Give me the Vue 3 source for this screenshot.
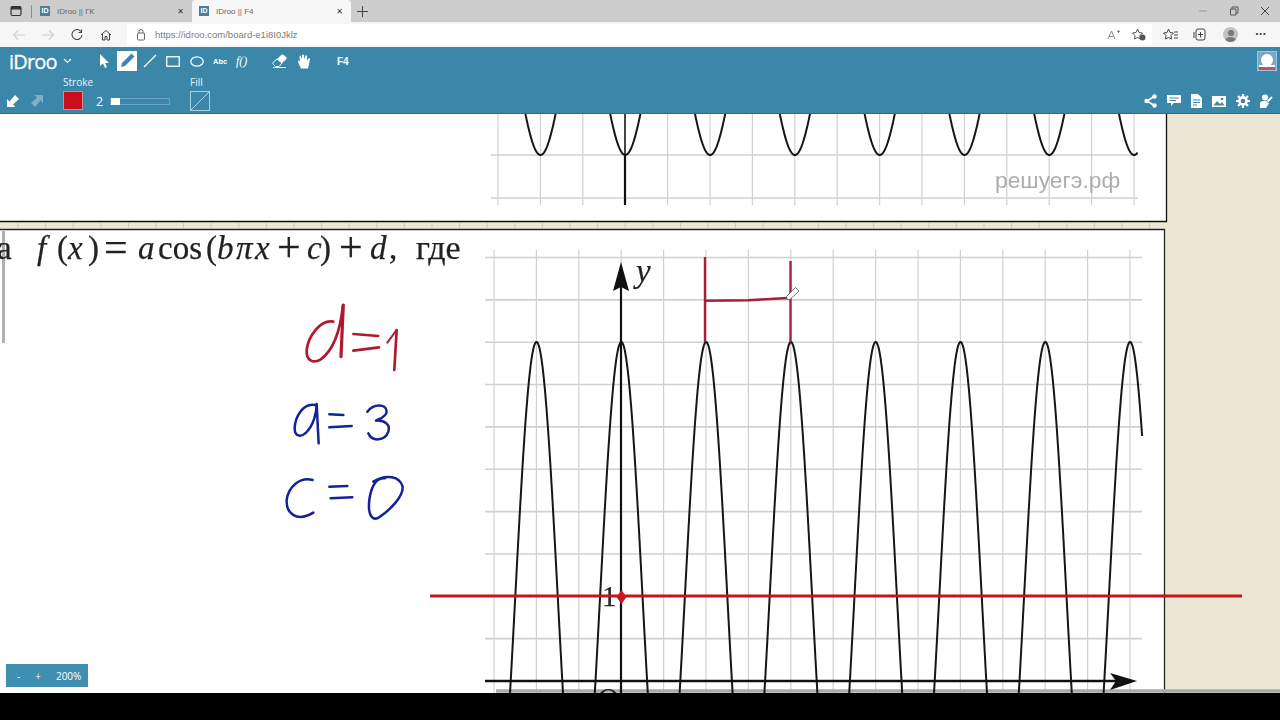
<script setup>
const range = (start, step, n) => Array.from({ length: n }, (_, i) => start + step * i)
const topV = range(498, 42.4, 16)
const topH = [155, 198]
const lowV = range(494, 42.4, 16)
const lowH = range(257.5, 42.35, 10)
const stripTicks = range(18, 27.6, 42)

const sample = (from, to, fn) => {
  const pts = []
  for (let x = from; x <= to + 0.01; x += 0.5) pts.push(`${x.toFixed(1)},${fn(x).toFixed(1)}`)
  return pts.join(' ')
}
const P = 84.8
const lowPeaks = range(536.5, 84.8, 8)
const lowCurves = lowPeaks.map((c, i) =>
  sample(c - 29, i === 7 ? 1142.5 : c + 29, x => 596 - 254 * Math.cos((2 * Math.PI * (x - c)) / P))
)
const topTroughs = range(540.5, 84.8, 8)
const topCurves = topTroughs.map((c, i) =>
  sample(c - 17, i === 7 ? 1138 : c + 17, x => 155 - 73 * (1 - Math.cos((2 * Math.PI * (x - c)) / P)))
)

const formula = [
  { t: 'f', x: 37, i: true },
  { t: '(', x: 57 },
  { t: 'x', x: 68, i: true },
  { t: ')', x: 88 },
  { t: '=', x: 104, s: 42 },
  { t: 'a', x: 138, i: true },
  { t: 'cos', x: 158 },
  { t: '(', x: 206 },
  { t: 'b', x: 217, i: true },
  { t: 'π', x: 236, i: true },
  { t: 'x', x: 255, i: true },
  { t: '+', x: 277, s: 42 },
  { t: 'c', x: 307, i: true },
  { t: ')', x: 320 },
  { t: '+', x: 339, s: 42 },
  { t: 'd', x: 370, i: true },
  { t: ',', x: 389 },
  { t: 'где', x: 416, s: 34 }
]

const redStrokes = [
  { d: 'M190 65C150 58 115 110 110 150C108 182 130 192 152 178C185 155 210 100 219 15', w: 8 },
  { d: 'M220 15L213 170', w: 9.5 },
  { d: 'M250 102L325 108', w: 7 },
  { d: 'M250 152L327 142', w: 8 },
  { d: 'M352 128L380 90', w: 6 },
  { d: 'M380 90L373 210', w: 8 }
]
const blueStrokes = [
  'M135 315C100 308 75 350 74 385C74 412 95 412 110 396C130 375 140 340 140 312L146 430',
  'M178 343L220 345',
  'M178 382L245 378',
  'M292 335C310 310 350 310 350 335C350 350 325 358 318 362C345 360 362 375 355 395C345 425 305 425 295 400',
  'M128 540C90 530 55 560 50 600C48 640 80 668 130 638',
  'M178 560L232 558',
  'M182 595L247 592',
  'M345 535C315 530 300 570 297 610C295 650 310 665 330 650C360 630 400 590 398 560C390 530 350 520 310 545'
]
</script>

<template>
  <div class="screen">
    <header class="tabstrip">
      <svg class="win-icon" width="12" height="12" viewBox="0 0 12 12"><rect x="1" y="1.5" width="10" height="9" rx="1.5" fill="none" stroke="#333" stroke-width="1.2"/><rect x="1" y="1.5" width="10" height="3" fill="#333"/></svg>
      <span class="tab-sep"></span>
      <div class="tab">
        <span class="favicon">ID</span>
        <span class="tab-title">IDroo || ГК</span>
        <span class="tab-close">✕</span>
      </div>
      <div class="tab active">
        <span class="favicon">ID</span>
        <span class="tab-title">IDroo || F4</span>
        <span class="tab-close">✕</span>
      </div>
      <svg class="plus" width="11" height="11" viewBox="0 0 11 11"><path d="M5.5 0V11M0 5.5H11" stroke="#444" stroke-width="1"/></svg>
      <div class="win-controls">
        <svg width="10" height="10" viewBox="0 0 10 10"><path d="M1 5H9" stroke="#999"/></svg>
        <svg width="10" height="10" viewBox="0 0 10 10"><path d="M1.5 3H7V9H1.5ZM3 3V1H9V7H7" fill="none" stroke="#555"/></svg>
        <svg width="10" height="10" viewBox="0 0 10 10"><path d="M1 1L9 9M9 1L1 9" stroke="#444"/></svg>
      </div>
    </header>

    <nav class="addressbar">
      <svg class="nav first" width="14" height="12" viewBox="0 0 14 12"><path d="M13 6H2M6 1.5L1.5 6L6 10.5" fill="none" stroke="#cfcfcf" stroke-width="1.1"/></svg>
      <svg class="nav" width="14" height="12" viewBox="0 0 14 12"><path d="M1 6H12M8 1.5L12.5 6L8 10.5" fill="none" stroke="#cfcfcf" stroke-width="1.1"/></svg>
      <svg class="nav" width="14" height="12" viewBox="0 0 14 12"><path d="M11 2.5A5 5 0 1 0 12 6M11.5 0.5V3.5H8.5" fill="none" stroke="#444" stroke-width="1.1"/></svg>
      <svg class="nav" width="14" height="12" viewBox="0 0 14 12"><path d="M2 6L7 1.5L12 6M3.5 5V11H6V7.5H8V11H10.5V5" fill="none" stroke="#444" stroke-width="1"/></svg>
      <div class="urlbox">
        <svg width="10" height="12" viewBox="0 0 10 12"><rect x="1.5" y="4" width="7" height="7" rx="1" fill="none" stroke="#666"/><path d="M3 4V2.5A2 2 0 0 1 7 2.5V4" fill="none" stroke="#666"/></svg>
        <span class="url">https://idroo.com/board-e1i8I0Jklz</span>
        <svg class="url-right" width="14" height="12" viewBox="0 0 14 12"><path d="M1 10L4.5 2L8 10M2.5 7.5H6.5M10 2.5H13M11.5 1V4" fill="none" stroke="#888"/></svg>
        <svg class="url-star" width="14" height="13" viewBox="0 0 14 13"><path d="M5.5 1L7 4.5L10.5 5L8 7.5L8.5 11L5.5 9.5L2.5 11L3 7.5L0.5 5L4 4.5Z" fill="none" stroke="#555"/><circle cx="10.5" cy="9.5" r="3" fill="#555"/></svg>
      </div>
      <div class="addr-right">
        <svg width="15" height="13" viewBox="0 0 15 13"><path d="M5.5 1L7 4.5L10.5 5L8 7.5L8.5 11L5.5 9.5L2.5 11L3 7.5L0.5 5L4 4.5ZM11 4H15M11 7H15M11 10H15" fill="none" stroke="#444"/></svg>
        <svg width="13" height="13" viewBox="0 0 13 13"><path d="M3 3A2 2 0 0 1 5 1H10A2 2 0 0 1 12 3V10A2 2 0 0 1 10 12H5A2 2 0 0 1 3 10ZM1 4V10M7.5 4V9.5M5 6.5H10" fill="none" stroke="#444"/></svg>
        <span class="avatar"><span class="avatar-head"></span><span class="avatar-body"></span></span>
        <span class="dots">···</span>
      </div>
    </nav>

    <section class="toolbar">
      <div class="row row-one">
        <span class="logo">iDroo</span>
        <svg class="chev" width="9" height="6" viewBox="0 0 9 6"><path d="M1 1L4.5 4.5L8 1" fill="none" stroke="#fff" stroke-width="1.2"/></svg>
        <svg class="tool cursor" width="12" height="16" viewBox="0 0 12 16"><path d="M2 1V13L5 10.5L7 15L9 14L7 10H11Z" fill="#fff"/></svg>
        <span class="pen-box"><svg width="16" height="16" viewBox="0 0 16 16"><path d="M2 14L3 10L11 2L14 5L6 13ZM11 2L12.5 .5L15.5 3.5L14 5" fill="#3a87aa"/></svg></span>
        <svg class="tool line-t" width="14" height="14" viewBox="0 0 14 14"><path d="M1 13L13 1" stroke="#fff" stroke-width="1.3"/></svg>
        <svg class="tool rect-t" width="14" height="11" viewBox="0 0 14 11"><rect x=".75" y=".75" width="12.5" height="9.5" fill="none" stroke="#fff" stroke-width="1.3"/></svg>
        <svg class="tool oval-t" width="14" height="11" viewBox="0 0 14 11"><ellipse cx="7" cy="5.5" rx="6.2" ry="4.7" fill="none" stroke="#fff" stroke-width="1.3"/></svg>
        <span class="abc">Abc</span>
        <span class="fx">f()</span>
        <svg class="tool eraser" width="15" height="14" viewBox="0 0 15 14"><path d="M5 5L9.5 .8Q10.5 0 11.5 .8L14.5 3.5Q15 4.5 14 5.5L10 9Z" fill="#fff"/><path d="M5 5L1 8.5Q.5 9.5 1.5 10.5L3.5 12.5H7L10 9Z" fill="none" stroke="#fff"/><path d="M1 13.5H14" stroke="#fff"/></svg>
        <svg class="tool hand" width="14" height="16" viewBox="0 0 14 15"><path d="M4 15L1 8.5Q0.5 7 2 7L3 8.5L2.5 2.5Q3 1.5 4 2.5L5 6V1.5Q6 .5 7 1.5V6L8.5 2Q9.5 1.5 10 2.5V7L12 4.5Q13.5 4.5 13 6L11 15Z" fill="#fff"/></svg>
        <span class="docname">F4</span>
        <span class="user-box"><span class="ub-head"></span><span class="ub-body"></span></span>
      </div>
      <div class="row row-two">
        <svg class="arrow" width="14" height="14" viewBox="0 0 14 14"><path d="M1 13V5L3.5 7.5L9 1L13 5L7 10.5L9.5 13Z" fill="#fff"/></svg>
        <svg class="arrow arrow-off" width="14" height="14" viewBox="0 0 14 14"><path d="M13 1V9L10.5 6.5L5 13L1 9L7 3.5L4.5 1Z" fill="#7fb0c8"/></svg>
        <div class="labelled stroke-block">
          <span class="mini">Stroke</span>
          <span class="swatch"></span>
        </div>
        <span class="size">2</span>
        <span class="slider"><span class="knob"></span></span>
        <div class="labelled fill-block">
          <span class="mini">Fill</span>
          <svg width="20" height="20" viewBox="0 0 20 20"><rect x=".5" y=".5" width="19" height="19" fill="none" stroke="#9fd3ea"/><path d="M1 19L19 1" stroke="#9fd3ea"/></svg>
        </div>
        <div class="right-icons">
          <svg width="13" height="14" viewBox="0 0 13 14"><path d="M11 2L3 7L11 12" fill="none" stroke="#fff" stroke-width="1.6"/><circle cx="10.5" cy="2.5" r="2.2" fill="#fff"/><circle cx="2.5" cy="7" r="2.2" fill="#fff"/><circle cx="10.5" cy="11.5" r="2.2" fill="#fff"/></svg>
          <svg width="14" height="12" viewBox="0 0 14 12"><path d="M0 0H14V8H7L4 11V8H0Z" fill="#fff"/><path d="M2.5 3H11.5M2.5 5.5H9" stroke="#3a87aa"/></svg>
          <svg width="11" height="14" viewBox="0 0 11 14"><path d="M0 0H7L11 4V14H0Z" fill="#fff"/><path d="M2 6H9M2 8.5H9M2 11H6" stroke="#3a87aa"/></svg>
          <svg width="14" height="11" viewBox="0 0 14 11"><rect width="14" height="11" fill="#fff"/><path d="M1.5 9.5L5 5L8 8L10 6L12.5 9.5Z" fill="#3a87aa"/><circle cx="10" cy="3" r="1.3" fill="#3a87aa"/></svg>
          <svg width="14" height="14" viewBox="0 0 14 14"><circle cx="7" cy="7" r="3.6" fill="none" stroke="#fff" stroke-width="2.6"/><path d="M7 0V3M7 11V14M0 7H3M11 7H14M2 2L4 4M10 10L12 12M12 2L10 4M4 10L2 12" stroke="#fff" stroke-width="2.2"/></svg>
          <svg width="14" height="14" viewBox="0 0 14 14"><circle cx="5" cy="3.5" r="3" fill="#fff"/><path d="M0 14V9.5Q0 7 3 7H6L9 9.5L6 14Z" fill="#fff"/><path d="M7.5 7.5L12 3" stroke="#fff" stroke-width="2"/></svg>
        </div>
      </div>
    </section>

    <main class="board">
      <svg class="sheet" width="1280" height="579" viewBox="0 114 1280 579">
        <rect x="0" y="114" width="1166" height="107" fill="#fff"/>
        <path d="M0 221.5H1166.5V114" fill="none" stroke="#111" stroke-width="1.3"/>
        <g stroke="#cfc9b4" stroke-width="1">
          <line v-for="x in stripTicks" :key="'st' + x" :x1="x" y1="223" :x2="x" y2="228"/>
        </g>
        <rect x="0" y="229" width="1164" height="464" fill="#fff"/>
        <path d="M0 229.5H1164.5V693" fill="none" stroke="#222" stroke-width="1.3"/>
        <rect x="2" y="231" width="3" height="112" fill="#b0b0b0"/>

        <g stroke="#d0d0d0" stroke-width="1.2">
          <line v-for="x in topV" :key="'tv' + x" :x1="x" y1="114" :x2="x" y2="205"/>
          <line v-for="y in topH" :key="'th' + y" x1="491" :y1="y" x2="1138" :y2="y" stroke-width="1.6"/>
          <line v-for="x in lowV" :key="'lv' + x" :x1="x" y1="250" :x2="x" y2="693"/>
          <line v-for="y in lowH" :key="'lh' + y" x1="485" :y1="y" x2="1142" :y2="y" stroke-width="1.6"/>
        </g>
        <line x1="496" y1="691" x2="1280" y2="691" stroke="#aaa" stroke-width="3.5"/>

        <g fill="none" stroke="#161616" stroke-width="2">
          <polyline v-for="(c, i) in topCurves" :key="'tc' + i" :points="c"/>
          <polyline v-for="(c, i) in lowCurves" :key="'lc' + i" :points="c"/>
        </g>
        <line x1="625" y1="155" x2="625" y2="205" stroke="#111" stroke-width="2.2"/>
        <line x1="625" y1="114" x2="625" y2="155" stroke="#111" stroke-width="1.5"/>

        <line x1="621" y1="285" x2="621" y2="693" stroke="#111" stroke-width="2.2"/>
        <path d="M621 262L629 291L621 287L613 291Z" fill="#111"/>
        <line x1="485" y1="681" x2="1120" y2="681" stroke="#111" stroke-width="2.4"/>
        <path d="M1137 681L1110 673L1116 681L1110 690Z" fill="#111"/>

        <text class="serif ital heavy" x="636" y="282" font-size="33">y</text>
        <text class="serif heavy" x="602" y="606" font-size="29">1</text>
        <text class="serif ital" x="596" y="708" font-size="30">O</text>

        <text class="watermark" x="995" y="188">решуегэ.рф</text>

        <text class="serif heavy" x="-3" y="259" font-size="33">а</text>
        <text
          v-for="(f, i) in formula"
          :key="'f' + i"
          class="serif heavy"
          :class="{ ital: f.i }"
          :x="f.x"
          :y="f.s === 42 ? 261 : 259"
          :font-size="f.s || 33"
        >{{ f.t }}</text>

        <line x1="430" y1="596" x2="1242" y2="596" stroke="#c2161f" stroke-width="2.8"/>
        <path d="M621.5 590L626.5 597L621.5 604L616.5 597Z" fill="#d0141f"/>

        <g fill="none" stroke="#a81f3d" stroke-width="2.4">
          <line x1="705" y1="257" x2="705" y2="342"/>
          <line x1="790.5" y1="261" x2="790.5" y2="342"/>
          <path d="M706 300.8L748 300.3L788 298" stroke-width="2.6"/>
        </g>
        <path d="M786.5 296.5L795.5 287.5L799 291L790 299.5L787 299.5Z" fill="#fff" stroke="#555" stroke-width=".8"/>

        <g transform="translate(270 300) scale(.3333)" fill="none" stroke-linecap="round" stroke-linejoin="round">
          <path v-for="(s, i) in redStrokes" :key="'r' + i" :d="s.d" stroke="#b0182e" :stroke-width="s.w"/>
          <path v-for="(d, i) in blueStrokes" :key="'b' + i" :d="d" stroke="#14229a" stroke-width="7.5"/>
        </g>
      </svg>
      <div class="zoombar"><span>-</span><span>+</span><span>200%</span></div>
    </main>
    <footer class="letterbox"></footer>
  </div>
</template>

<style>
html, body { margin: 0; background: #000; }
</style>

<style scoped>
.screen { width: 1280px; height: 720px; display: flex; flex-direction: column; overflow: hidden; font-family: "Open Sans", "Liberation Sans", sans-serif; }

.tabstrip { height: 22px; background: #cdcdcd; display: flex; align-items: center; flex: none; position: relative; }
.win-icon { margin-left: 10px; }
.tab-sep { width: 1px; height: 13px; background: #8f8f8f; margin-left: 9px; margin-right: 1px; }
.tab { width: 159px; height: 22px; display: flex; align-items: center; box-sizing: border-box; padding-left: 6px; }
.tab.active { background: #f7f7f7; border-radius: 4px 4px 0 0; }
.favicon { width: 10px; height: 10px; background: #4b7f9c; color: #fff; font: bold 7px/10px "Liberation Sans", sans-serif; text-align: center; margin-left: 1px; }
.tab-title { font-size: 8px; color: #666; margin-left: 7px; flex: 1; font-family: "Liberation Sans", sans-serif; }
.tab-close { font-size: 8px; color: #333; margin-right: 8px; font-family: "DejaVu Sans", sans-serif; }
.plus { margin-left: 6px; }
.win-controls { margin-left: auto; margin-right: 10px; display: flex; gap: 21px; }

.addressbar { height: 25px; background: #f6f6f6; display: flex; align-items: center; flex: none; }
.nav { margin-right: 15px; }
.nav.first { margin-left: 12px; }
.urlbox { width: 1025px; height: 21px; background: #fff; display: flex; align-items: center; box-sizing: border-box; padding-left: 9px; margin-left: -1px; }
.url { font-size: 9.5px; color: #7c7c7c; margin-left: 9px; font-family: "Liberation Sans", sans-serif; }
.url-right { margin-left: auto; }
.url-star { margin-left: 11px; margin-right: 6px; }
.addr-right { display: flex; align-items: center; margin-left: 11px; gap: 15px; }
.avatar { width: 15px; height: 15px; border-radius: 50%; background: #c4c0bb; position: relative; overflow: hidden; margin-left: 2px; }
.avatar-head { position: absolute; left: 4.5px; top: 2.5px; width: 6px; height: 6px; border-radius: 50%; background: #777; }
.avatar-body { position: absolute; left: 2px; top: 10px; width: 11px; height: 8px; border-radius: 50%; background: #777; }
.dots { font: bold 10px "DejaVu Sans", sans-serif; color: #444; margin-left: 2px; }

.toolbar { height: 67px; background: #3a87aa; flex: none; box-sizing: border-box; border-bottom: 1px solid #2c6f8c; color: #fff; }
.row { display: flex; align-items: center; }
.row-one { height: 28px; }
.row-two { height: 38px; position: relative; }
.logo { font-size: 20px; font-weight: 400; letter-spacing: -.8px; -webkit-text-stroke: .3px #fff; margin-left: 9px; color: #fff; font-family: "Open Sans", sans-serif; width: 54px; }
.chev { margin-left: 0; }
.cursor { margin-left: 26px; }
.pen-box { width: 20px; height: 20px; background: #fff; display: flex; align-items: center; justify-content: center; margin-left: 7px; }
.line-t { margin-left: 6px; }
.rect-t { margin-left: 9px; }
.oval-t { margin-left: 10px; }
.abc { font: bold 7.5px "Liberation Sans", sans-serif; margin-left: 9px; width: 15px; }
.fx { font: italic 12px "Liberation Serif", serif; margin-left: 8px; width: 14px; }
.eraser { margin-left: 22px; }
.hand { margin-left: 10px; }
.docname { font: bold 10px "Liberation Sans", sans-serif; margin-left: 26px; }
.user-box { margin-left: auto; margin-right: 3px; width: 20px; height: 20px; background: #77a9c6; border: 1px solid #9cc4da; box-sizing: border-box; position: relative; overflow: hidden; }
.ub-head { position: absolute; left: 3px; top: 2px; width: 12px; height: 12px; border-radius: 50%; background: #fff; }
.ub-body { position: absolute; left: 1px; bottom: 0; width: 16px; height: 5px; background: linear-gradient(#fff 40%, #c8505a 40%); }

.row-two > .arrow, .row-two > .size, .row-two > .slider, .right-icons { margin-top: 14px; }
.arrow { margin-left: 6px; }
.arrow-off { margin-left: 10px; }
.labelled { display: flex; flex-direction: column; align-self: flex-start; }
.mini { font-size: 10px; line-height: 13px; color: #eaf4f8; height: 15px; margin-top: 1px; }
.stroke-block { margin-left: 19px; width: 20px; }
.swatch { width: 20px; height: 19px; box-sizing: border-box; background: #c90f1c; border: 1px solid #d88a94; }
.size { font-size: 12.5px; margin-left: 13px; width: 7px; }
.slider { width: 60px; height: 7px; border: 1px solid #67a5c2; box-sizing: border-box; margin-left: 7px; position: relative; }
.knob { position: absolute; left: 0; top: -1px; width: 9px; height: 7px; background: #fff; }
.fill-block { margin-left: 20px; }
.right-icons { margin-left: auto; margin-right: 6px; display: flex; align-items: center; gap: 10px; }

.board { height: 579px; flex: none; background-color: #ece6d4; position: relative; overflow: hidden; }
.sheet { display: block; filter: blur(.3px); }
.serif { font-family: "Liberation Serif", serif; fill: #222; }
.heavy { stroke: #222; stroke-width: .25px; }
.ital { font-style: italic; }
.watermark { font-family: "Liberation Sans", sans-serif; font-size: 22.8px; fill: #adadad; }
.zoombar { position: absolute; left: 6px; bottom: 6px; width: 82px; height: 23px; background: #3e8fb1; color: #fff; font-size: 10px; display: flex; align-items: center; box-sizing: border-box; padding-left: 11px; gap: 15px; }
.letterbox { flex: 1; background: #000; }
</style>
